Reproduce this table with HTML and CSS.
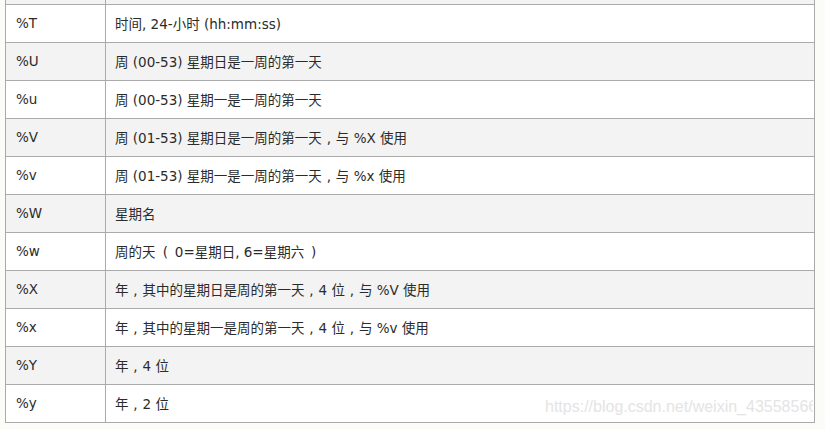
FILE: index.html
```html
<!DOCTYPE html>
<html>
<head>
<meta charset="utf-8">
<link rel="stylesheet" href="styles.css">
</head>
<body>
<div class="page">
<table class="spec">
<tr class="stub alt"><td class="c1"></td><td class="c2"></td></tr>
<tr><td class="c1">%T</td><td class="c2">时间, 24-小时 (hh:mm:ss)</td></tr>
<tr class="alt"><td class="c1">%U</td><td class="c2">周 (00-53) 星期日是一周的第一天</td></tr>
<tr><td class="c1">%u</td><td class="c2">周 (00-53) 星期一是一周的第一天</td></tr>
<tr class="alt"><td class="c1">%V</td><td class="c2">周 (01-53) 星期日是一周的第一天<span class="cm">,</span>与 %X 使用</td></tr>
<tr><td class="c1">%v</td><td class="c2">周 (01-53) 星期一是一周的第一天<span class="cm">,</span>与 %x 使用</td></tr>
<tr class="alt"><td class="c1">%W</td><td class="c2">星期名</td></tr>
<tr><td class="c1">%w</td><td class="c2">周的天 <span class="lp">(</span>0=星期日, 6=星期六<span class="rp">)</span></td></tr>
<tr class="alt"><td class="c1">%X</td><td class="c2">年<span class="cm">,</span>其中的星期日是周的第一天<span class="cm">,</span>4 位<span class="cm">,</span>与 %V 使用</td></tr>
<tr><td class="c1">%x</td><td class="c2">年<span class="cm">,</span>其中的星期一是周的第一天<span class="cm">,</span>4 位<span class="cm">,</span>与 %v 使用</td></tr>
<tr class="alt"><td class="c1">%Y</td><td class="c2">年<span class="cm">,</span>4 位</td></tr>
<tr><td class="c1">%y</td><td class="c2">年<span class="cm">,</span>2 位</td></tr>
</table>
<div class="wm"><span>https://blog.csdn.net/weixin_43558566</span></div>
</div>
</body>
</html>
```
FILE: styles.css
```css
html, body {
  margin: 0;
  padding: 0;
  background: #fbfbf7;
}
.page {
  position: relative;
  width: 825px;
  height: 429px;
  overflow: hidden;
}
.spec {
  border-collapse: collapse;
  margin-left: 5px;
  width: 810px;
  font-family: "DejaVu Sans", Verdana, "Noto Sans CJK SC", sans-serif;
  font-size: 13.5px;
  color: #2b2b2b;
  background: #fff;
}
.spec td {
  border: 1px solid #aaa;
  padding: 0 9px;
  box-sizing: border-box;
  height: 38px;
  vertical-align: middle;
}
.spec td.c1 {
  width: 100px;
  padding-left: 10px;
}
.spec tr.alt td {
  background: #f3f3f3;
}
.spec tr.stub td {
  height: 4px;
  border-top: none;
}
.cm {
  display: inline-block;
  width: 14px;
  text-align: center;
}
.lp {
  display: inline-block;
  width: 15px;
  text-align: left;
  padding-left: 3px;
  box-sizing: border-box;
}
.rp {
  display: inline-block;
  width: 12px;
  text-align: right;
}
.wm {
  position: absolute;
  left: 545px;
  top: 398px;
  width: 268px;
  overflow: hidden;
  white-space: nowrap;
  font-family: "Liberation Sans", Arial, sans-serif;
  font-size: 16px;
  color: #e4e4e4;
}
```
